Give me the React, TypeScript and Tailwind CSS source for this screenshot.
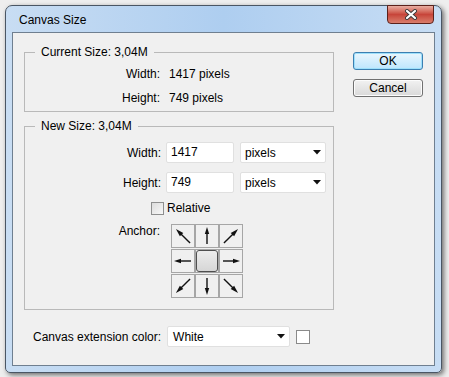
import React from 'react';

const font = { fontFamily: '"Liberation Sans", Arial, sans-serif' };

// arrow angles for the 3x3 anchor grid (null = centre)
const anchors: (number | null)[] = [-45, 0, 45, -90, null, 90, -135, 180, 135];

function Arrow({ angle }: { angle: number }) {
  const diag = angle % 90 !== 0;
  return (
    <svg width="22" height="22" viewBox="0 0 22 22">
      <g transform={`rotate(${angle} 11 11)`}>
        <line x1="11" y1={diag ? 21 : 19} x2="11" y2="7" stroke="#111" strokeWidth="1.4" />
        <polygon points={diag ? '11,1 8.6,9 13.4,9' : '11,2 8.8,9 13.2,9'} fill="#111" />
      </g>
    </svg>
  );
}

function Caret() {
  return (
    <svg width="8" height="5" viewBox="0 0 8 5">
      <polygon points="0,0 8,0 4,4.5" fill="#111" />
    </svg>
  );
}

export default function App() {
  return (
    <div className="w-[449px] h-[377px] bg-[#eeeeee] pt-[5px] pl-[5px] overflow-hidden" style={font}>
      <div className="w-[437px] h-[368px] flex flex-col rounded-t-[7px] rounded-b-[5px] border border-[#4a5664] bg-linear-to-r from-[#c8ddf3] via-[#aecef0] to-[#c7ddf4] px-[6px] pb-[6px] shadow-[2px_2px_5px_rgba(0,0,0,0.55)]">
        {/* title bar */}
        <div className="h-[26px] flex items-start justify-between">
          <span className="pl-[7px] pt-[7px] text-[12px] leading-[14px] text-black">Canvas Size</span>
          <div className="w-[47px] h-[19px] -mt-px mr-px rounded-b-[4px] border border-[#5b211b] bg-linear-to-b from-[#e8aea3] via-[#c7453a] to-[#d97d6c] flex items-center justify-center">
            <svg width="14" height="11" viewBox="0 0 14 11">
              <path d="M3 2 L11 9 M11 2 L3 9" stroke="#3a3a3a" strokeWidth="4" strokeLinecap="round" />
              <path d="M3 2 L11 9 M11 2 L3 9" stroke="#ffffff" strokeWidth="2.2" strokeLinecap="round" />
            </svg>
          </div>
        </div>

        {/* client area */}
        <div className="flex-1 border border-[#6f7f90] bg-[#f0f0f0] flex pl-[11px] pt-[12px] text-[12px] text-black">
          <div className="w-[310px] flex flex-col">
            <fieldset className="border border-[#b9b9b9] pb-[5px]">
              <legend className="ml-[10px] px-[6px] leading-[15px]">Current Size: 3,04M</legend>
              <div className="mt-[7px] flex h-[15px] leading-[15px]">
                <span className="w-[135px] text-right">Width:</span>
                <span className="ml-[9px]">1417 pixels</span>
              </div>
              <div className="mt-[9px] flex h-[15px] leading-[15px]">
                <span className="w-[135px] text-right">Height:</span>
                <span className="ml-[9px]">749 pixels</span>
              </div>
            </fieldset>

            <fieldset className="mt-[7px] border border-[#b9b9b9] pb-[11px]">
              <legend className="ml-[10px] px-[6px] leading-[15px]">New Size: 3,04M</legend>
              <div className="mt-[8px] flex items-center h-[21px]">
                <span className="w-[136px] text-right">Width:</span>
                <div className="ml-[5px] w-[68px] h-[21px] rounded-[2px] border border-[#e0e0e0] bg-white pl-[4px] leading-[19px]">1417</div>
                <div className="ml-[6px] w-[86px] h-[21px] rounded-[2px] border border-[#e0e0e0] bg-white pl-[4px] pr-[4px] flex items-center justify-between">
                  <span>pixels</span>
                  <Caret />
                </div>
              </div>
              <div className="mt-[9px] flex items-center h-[21px]">
                <span className="w-[136px] text-right">Height:</span>
                <div className="ml-[5px] w-[68px] h-[21px] rounded-[2px] border border-[#e0e0e0] bg-white pl-[4px] leading-[19px]">749</div>
                <div className="ml-[6px] w-[86px] h-[21px] rounded-[2px] border border-[#e0e0e0] bg-white pl-[4px] pr-[4px] flex items-center justify-between">
                  <span>pixels</span>
                  <Caret />
                </div>
              </div>
              <div className="mt-[8px] flex items-center h-[15px] pl-[126px]">
                <div className="w-[13px] h-[13px] border border-[#8e8f8f] bg-linear-to-br from-[#dcdcdc] to-[#f8f8f8]" />
                <span className="ml-[3px] leading-[15px]">Relative</span>
              </div>
              <div className="mt-[8px] flex items-start">
                <span className="w-[135px] text-right leading-[15px]">Anchor:</span>
                <div className="ml-[11px] grid grid-cols-[24px_24px_24px] gap-y-px">
                  {anchors.map((a, i) => (
                    <div key={i} className="w-[24px] h-[24px] border border-[#a6a6a6] flex items-center justify-center">
                      {a === null ? (
                        <div className="w-[22px] h-[22px] rounded-[3px] border border-[#4f4f4f] bg-linear-to-b from-[#ececec] to-[#d6d6d6]" />
                      ) : (
                        <Arrow angle={a} />
                      )}
                    </div>
                  ))}
                </div>
              </div>
            </fieldset>

            <div className="mt-[16px] flex items-center h-[21px] pl-[9px]">
              <span>Canvas extension color:</span>
              <div className="ml-[6px] w-[123px] h-[21px] rounded-[2px] border border-[#e0e0e0] bg-white pl-[5px] pr-[4px] flex items-center justify-between">
                <span>White</span>
                <Caret />
              </div>
              <div className="ml-[6px] w-[14px] h-[14px] border border-[#8a8a8a] bg-white" />
            </div>
          </div>

          <div className="ml-[19px] mt-[7px] flex flex-col gap-[9px]">
            <button className="w-[70px] h-[18px] rounded-[3px] border border-[#3c7fb1] bg-linear-to-b from-[#eaf6fd] to-[#bee6fd] leading-[16px] text-center shadow-[inset_0_0_0_1px_#9ee0fb]">
              OK
            </button>
            <button className="w-[70px] h-[18px] rounded-[3px] border border-[#707070] bg-linear-to-b from-[#f2f2f2] to-[#d9d9d9] leading-[16px] text-center shadow-[inset_0_0_0_1px_#fcfcfc]">
              Cancel
            </button>
          </div>
        </div>
      </div>
    </div>
  );
}
